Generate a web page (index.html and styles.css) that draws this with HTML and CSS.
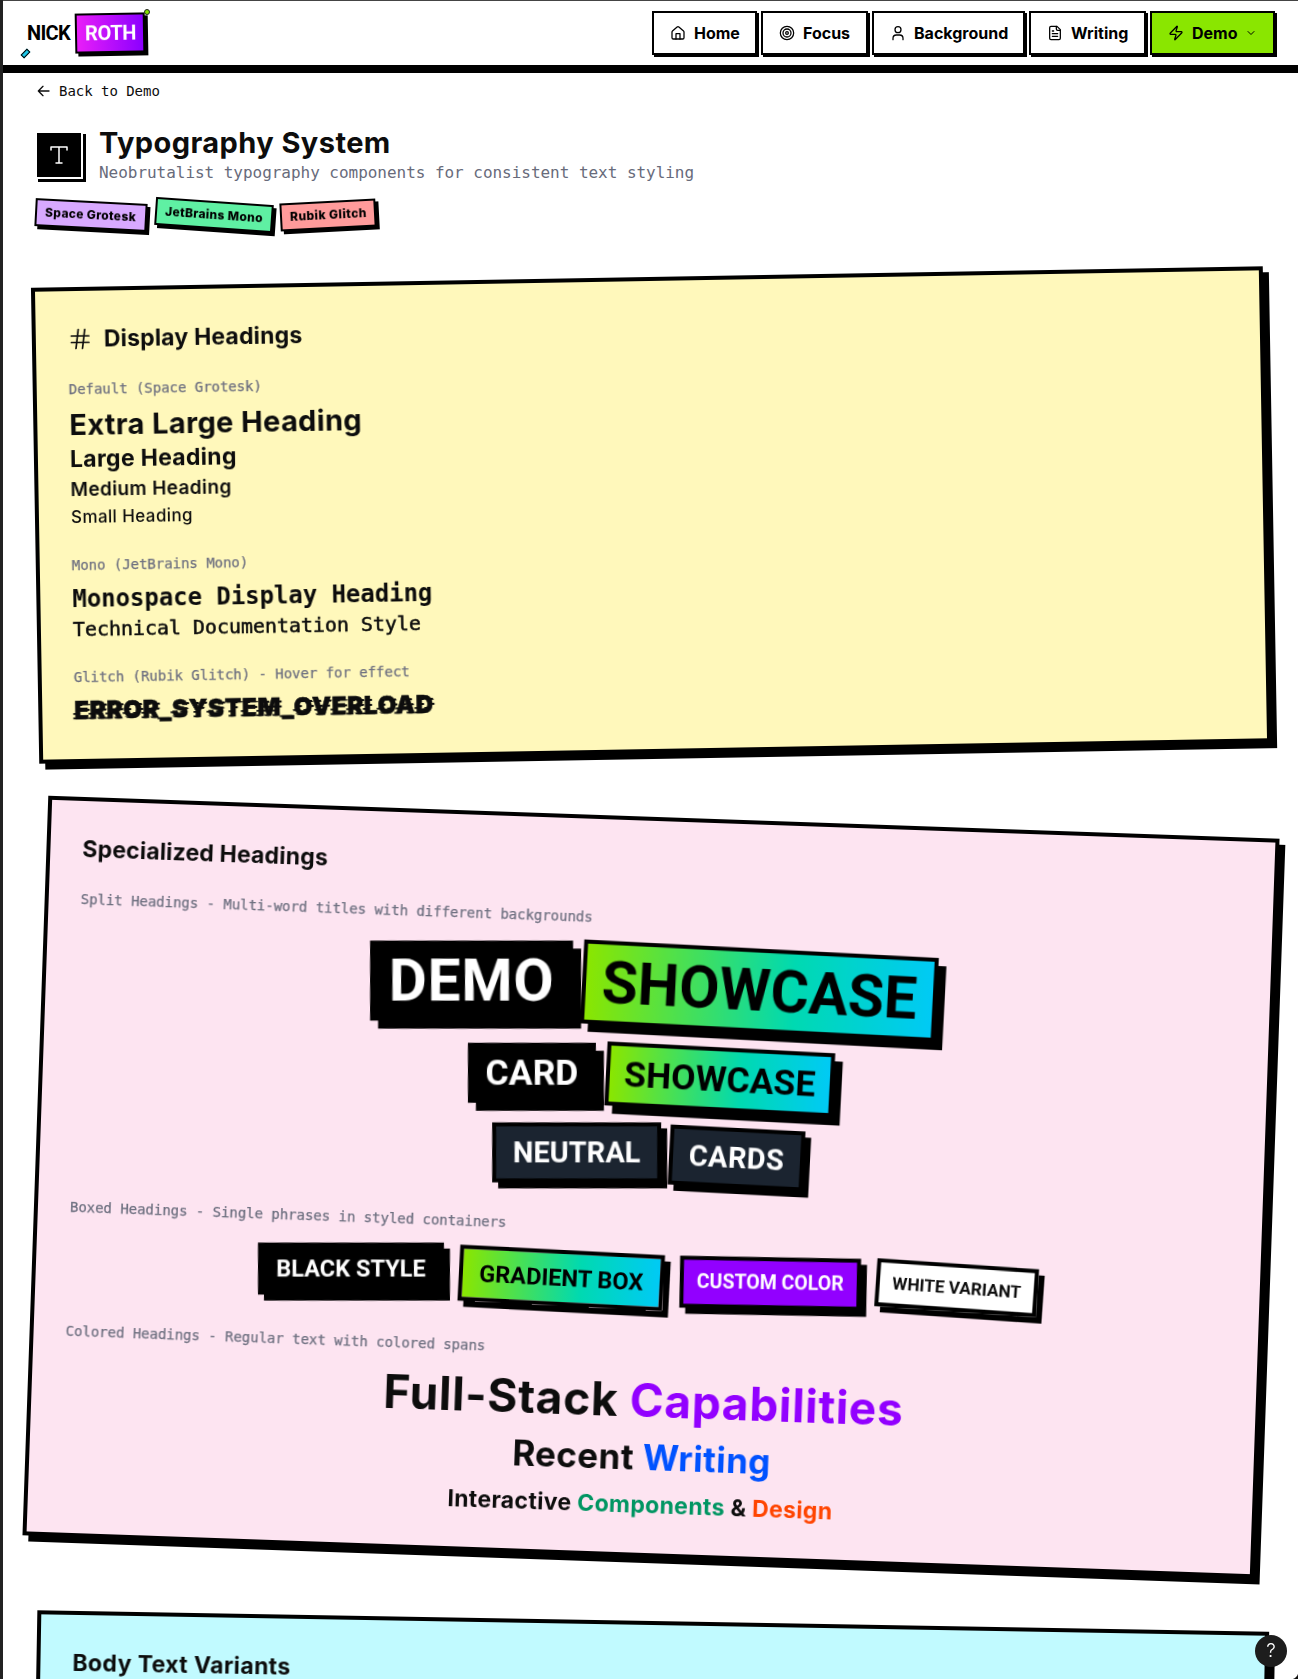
FILE: index.html
```html
<!DOCTYPE html>
<html lang="en">
<head>
<meta charset="utf-8">
<title>Typography System</title>
<link rel="stylesheet" href="styles.css">
</head>
<body>
<header class="site-header">
  <a class="logo">
    <span class="logo-first">NICK</span>
    <span class="logo-last">ROTH</span>
    <i class="logo-dot"></i>
    <i class="logo-dash"></i>
  </a>
  <nav class="nav">
    <a class="nav-link nav-home"><svg class="icon" viewBox="0 0 24 24"><path d="M3 10.5a2 2 0 0 1 .7-1.5l7-6a2 2 0 0 1 2.6 0l7 6a2 2 0 0 1 .7 1.5V19a2 2 0 0 1-2 2H5a2 2 0 0 1-2-2z"/><path d="M15 21v-8H9v8"/></svg><span>Home</span></a>
    <a class="nav-link nav-focus"><svg class="icon" viewBox="0 0 24 24"><circle cx="12" cy="12" r="10"/><circle cx="12" cy="12" r="6"/><circle cx="12" cy="12" r="2"/></svg><span>Focus</span></a>
    <a class="nav-link nav-background"><svg class="icon" viewBox="0 0 24 24"><circle cx="12" cy="7" r="4.5"/><path d="M4.500 22v-2a5 5 0 0 1 5-5h5a5 5 0 0 1 5 5v2"/></svg><span>Background</span></a>
    <a class="nav-link nav-writing"><svg class="icon" viewBox="0 0 24 24"><path d="M15 2H6a2 2 0 0 0-2 2v16a2 2 0 0 0 2 2h12a2 2 0 0 0 2-2V7z"/><path d="M14 2v4a2 2 0 0 0 2 2h4M10 9H8M16 13H8M16 17H8"/></svg><span>Writing</span></a>
    <a class="nav-link nav-demo"><svg class="icon" viewBox="0 0 24 24"><path d="M4 14a1 1 0 0 1-.8-1.6l9.900-10.200a.5.5 0 0 1 .9.500l-1.900 6A1 1 0 0 0 13 10h7a1 1 0 0 1 .8 1.600l-9.900 10.200a.5.5 0 0 1-.9-.5l1.900-6A1 1 0 0 0 11 14z"/></svg><span>Demo</span><svg class="chevron" viewBox="0 0 24 24"><path d="m6 9 6 6 6-6"/></svg></a>
  </nav>
</header>

<main class="page">
  <a class="back"><svg class="icon" viewBox="0 0 24 24"><path d="m12 5-7 7 7 7M21 12H5"/></svg><span>Back to Demo</span></a>

  <div class="intro">
    <span class="intro-icon"><svg viewBox="0 0 24 24"><path d="M4 7V4h16v3M9 20h6M12 4v16"/></svg></span>
    <div>
      <h1 class="h-xl intro-title">Typography System</h1>
      <p class="intro-text">Neobrutalist typography components for consistent text styling</p>
    </div>
  </div>
  <div class="tags">
    <span class="tag tag-purple">Space Grotesk</span>
    <span class="tag tag-green">JetBrains Mono</span>
    <span class="tag tag-red">Rubik Glitch</span>
  </div>

  <section class="card card-yellow">
    <h2 class="card-title"><svg class="hash" viewBox="0 0 24 24"><path d="M3.500 9h17.500M3.500 15.500h17.500M10.500 2.500 8 21.500M17 2.500l-2.500 19"/></svg>Display Headings</h2>
    <div class="group">
      <p class="label">Default (Space Grotesk)</p>
      <div class="samples">
        <h3 class="h-xl">Extra Large Heading</h3>
        <h3 class="h-lg">Large Heading</h3>
        <h3 class="h-md">Medium Heading</h3>
        <h3 class="h-sm">Small Heading</h3>
      </div>
    </div>
    <div class="group">
      <p class="label">Mono (JetBrains Mono)</p>
      <div class="samples">
        <h3 class="mono-lg">Monospace Display Heading</h3>
        <h3 class="mono-md">Technical Documentation Style</h3>
      </div>
    </div>
    <div class="group">
      <p class="label">Glitch (Rubik Glitch) - Hover for effect</p>
      <div class="samples">
        <h3 class="glitch" data-text="ERROR_SYSTEM_OVERLOAD">ERROR_SYSTEM_OVERLOAD</h3>
      </div>
    </div>
  </section>

  <section class="card card-pink">
    <h2 class="card-title">Specialized Headings</h2>
    <div class="stack">
      <p class="label">Split Headings - Multi-word titles with different backgrounds</p>
      <h3 class="split split-xl"><span class="box box-black">DEMO</span><span class="box box-gradient">SHOWCASE</span></h3>
      <h3 class="split split-lg"><span class="box box-black">CARD</span><span class="box box-gradient">SHOWCASE</span></h3>
      <h3 class="split split-md"><span class="box box-neutral">NEUTRAL</span><span class="box box-neutral box-tilt">CARDS</span></h3>
    </div>
    <div class="stack">
      <p class="label">Boxed Headings - Single phrases in styled containers</p>
      <div class="boxed">
        <h3 class="box box-black boxed-black">BLACK STYLE</h3>
        <h3 class="box box-gradient boxed-gradient">GRADIENT BOX</h3>
        <h3 class="box boxed-purple">CUSTOM COLOR</h3>
        <h3 class="box boxed-white">WHITE VARIANT</h3>
      </div>
    </div>
    <div class="stack">
      <p class="label">Colored Headings - Regular text with colored spans</p>
      <div class="colored">
        <h3 class="c-xl">Full-Stack <span class="purple">Capabilities</span></h3>
        <h3 class="c-lg">Recent <span class="blue">Writing</span></h3>
        <h3 class="c-md">Interactive <span class="green">Components</span> &amp; <span class="orange">Design</span></h3>
      </div>
    </div>
  </section>

  <section class="card card-cyan">
    <h2 class="card-title body-title">Body Text Variants</h2>
  </section>
</main>

<button class="help">?</button>
<i class="corner"></i>
</body>
</html>
```
FILE: styles.css
```css
* { box-sizing: border-box; margin: 0; padding: 0; }

html, body { height: 1679px; overflow: hidden; }

body {
  background: #fff;
  border-left: 3px solid #222;
  color: #0d0d0d;
  font-family: Inter, "Liberation Sans", sans-serif;
}

svg { fill: none; stroke: currentColor; stroke-width: 2; stroke-linecap: round; stroke-linejoin: round; flex: none; }
h1, h2, h3 { font-weight: 700; white-space: nowrap; }
.icon { width: 16px; height: 16px; }

/* Header */
.site-header {
  display: flex;
  align-items: center;
  justify-content: space-between;
  height: 73px;
  padding: 0 23px 0 24px;
  border-top: 1px solid #444;
  border-bottom: 8px solid #000;
  color: #000;
}

.logo {
  position: relative;
  display: flex;
  align-items: center;
  gap: 5px;
  font: 700 20px/28px Roboto, sans-serif;
}
.logo-first { width: 43px; letter-spacing: -0.7px; }
.logo-last {
  width: 70px;
  padding: 4px 8px;
  border: 2px solid #000;
  background: linear-gradient(90deg, #e91ef8, #8b00ff);
  filter: drop-shadow(3px 3px 0 #000);
  color: #fff;
  letter-spacing: -0.4px;
  transform: rotate(-1deg);
}
.logo-dot {
  position: absolute;
  top: -4px;
  right: -5px;
  width: 6px;
  height: 6px;
  border: 1px solid #222;
  border-radius: 50%;
  background: #84e000;
}
.logo-dash {
  position: absolute;
  left: -6px;
  bottom: -3px;
  width: 9px;
  height: 5px;
  border: 1px solid #000;
  background: #1cc6e8;
  transform: rotate(-45deg);
}

.nav { display: flex; gap: 4px; }
.nav-link {
  display: flex;
  align-items: center;
  gap: 8px;
  height: 44px;
  padding: 0 14px 0 16px;
  border: 2px solid #000;
  background: #fff;
  box-shadow: 2px 2px 0 #000;
  font-size: 16px;
  font-weight: 700;
}
.nav-link .icon { stroke-width: 1.9; }
.nav-home { width: 105px; }
.nav-focus { width: 107px; }
.nav-background { width: 153px; }
.nav-writing { width: 117px; }
.nav-demo { width: 125px; background: #8ae600; }
.nav-link .chevron { width: 12px; height: 12px; margin-left: -1px; }

/* Page intro */
.page { padding: 8px 31px 0 32px; }

.back {
  display: flex;
  align-items: center;
  gap: 8px;
  height: 20px;
  font: 14px/20px "DejaVu Sans Mono", monospace;
  letter-spacing: -0.03px;
}

.intro { display: flex; align-items: center; gap: 16px; margin-top: 24px; }
.intro-icon {
  display: flex;
  align-items: center;
  justify-content: center;
  width: 48px;
  height: 48px;
  border: 2px solid #fff;
  background: #000;
  box-shadow: 3px 3px 0 #000;
  color: #fff;
}
.intro-icon svg { width: 24px; height: 24px; stroke-width: 1.5; }
.intro-title { letter-spacing: 0.42px; }
.intro-text {
  color: #686b7b;
  font: 16px/24px "DejaVu Sans Mono", monospace;
  letter-spacing: -0.035px;
}

.tags { display: flex; gap: 8px; margin-top: 16px; }
.tag {
  padding: 4px 8px;
  border: 2px solid #000;
  filter: drop-shadow(3px 3px 0 #000);
  color: #000;
  font-size: 12px;
  font-weight: 800;
  line-height: 16px;
  letter-spacing: 0.35px;
  white-space: nowrap;
}
.tag-purple { width: 112px; background: #d8a9ff; transform: rotate(3deg); }
.tag-green { width: 118px; background: #5ff0a3; transform: rotate(4deg); }
.tag-red { width: 96px; margin-left: -1px; background: #ff9b9b; letter-spacing: 0.45px; transform: rotate(-3deg); }

/* Type scale */
.h-xl { font-size: 29px; line-height: 36px; letter-spacing: 0.36px; }
.h-xl.intro-title { letter-spacing: 0.42px; }
.h-lg { font-size: 23px; line-height: 32px; letter-spacing: 0.3px; }
.h-md { padding-top: 1px; font-size: 19px; line-height: 27px; font-weight: 600; letter-spacing: 0.37px; }
.h-sm { font-size: 17px; line-height: 28px; font-weight: 500; letter-spacing: 0.4px; }
.mono-lg { font: 700 24px/32px "DejaVu Sans Mono", monospace; letter-spacing: -0.05px; }
.mono-md { font: 400 20px/28px "DejaVu Sans Mono", monospace; letter-spacing: -0.04px; -webkit-text-stroke: 0.5px; }

.glitch {
  position: relative;
  width: max-content;
  font-size: 24px;
  font-weight: 900;
  line-height: 32px;
  letter-spacing: 0.75px;
  -webkit-text-stroke: 0.6px;
}
.glitch::before, .glitch::after { content: attr(data-text); position: absolute; left: 0; top: 0; }
.glitch::before { transform: translateX(2px); clip-path: polygon(0 28%, 100% 28%, 100% 34%, 0 34%, 0 44%, 100% 44%, 100% 50%, 0 50%); }
.glitch::after { transform: translateX(-2px); clip-path: polygon(0 56%, 100% 56%, 100% 62%, 0 62%, 0 70%, 100% 70%, 100% 80%, 0 80%); }

.label {
  color: #6e7080;
  font: 14px/20px "DejaVu Sans Mono", monospace;
  letter-spacing: -0.03px;
  white-space: nowrap;
  -webkit-text-stroke: 0.25px;
}

/* Cards */
.card {
  padding: 32px;
  border: 4px solid #000;
  filter: drop-shadow(6px 6px 0 #000);
}
.card-title {
  display: flex;
  align-items: center;
  gap: 12px;
  font-size: 23px;
  line-height: 32px;
  letter-spacing: 0.18px;
}
.card-yellow { margin-top: 48px; background: #fff8bb; transform: rotate(-1deg); }
.card-pink { height: 740px; margin-top: 64px; background: #fde4f1; transform: rotate(2deg); }
.card-cyan { height: 260px; margin-top: 64px; background: #c1faff; transform: rotate(1deg); }
.body-title { letter-spacing: 0.38px; }
.hash { width: 24px; height: 24px; stroke-width: 1.7; }
.group { margin-top: 24px; }
.samples { margin-top: 8px; }

.stack { display: flex; flex-direction: column; gap: 16px; margin-top: 32px; }
.card-title + .stack { margin-top: 24px; }

.split {
  display: flex;
  align-items: center;
  justify-content: center;
  gap: 8px;
  padding-right: 8px;
}
.split-xl { padding-right: 11px; font-size: 58.500px; line-height: 60px; gap: 7px; }
.split-lg { font-size: 35.500px; line-height: 40px; padding-right: 10px; }
.split-md { font-size: 29px; line-height: 36px; }

.box {
  padding: 8px 0;
  border: 4px solid #000;
  filter: drop-shadow(6px 6px 0 #000);
  font-family: Roboto, "Liberation Sans", sans-serif;
  text-align: center;
}
.box-black { margin: 2px; border-width: 2px; background: #000; color: #fff; transform: rotate(-2deg); }
.box-gradient { background: linear-gradient(90deg, #8ae600, #00d9b1 60%, #00caf5); color: #000; transform: rotate(1deg); }
.box-neutral { background: #1b2430; color: #fff; transform: rotate(-2deg); }
.box-neutral.box-tilt { transform: rotate(1deg); }

.split-xl .box, .split-lg .box { filter: drop-shadow(8px 8px 0 #000); }
.split-xl .box-black { width: 203px; letter-spacing: 0.8px; }
.split-xl .box-gradient { width: 355px; }
.split-lg .box-black { width: 128px; }
.split-lg .box-gradient { width: 228px; }
.split-md .box-neutral { width: 169px; }
.split-md .box-tilt { width: 135px; letter-spacing: 0.4px; }

.boxed { display: flex; align-items: flex-start; justify-content: center; gap: 15.500px; height: 56px; }
.boxed-black { width: 186px; margin: 0; font-size: 23.500px; line-height: 32px; }
.boxed-gradient { width: 205px; font-size: 23.500px; line-height: 32px; filter: none; box-shadow: 6px 6px 0 #000; }
.boxed-purple { width: 181px; background: #9200ff; color: #fff; font-size: 19.500px; line-height: 28px; transform: rotate(-1deg); }
.boxed-white { width: 162px; background: #fff; color: #0d0d0d; font-size: 17.200px; line-height: 24px; transform: rotate(2deg); filter: none; box-shadow: 6px 6px 0 #000; }

.colored { display: flex; flex-direction: column; align-items: center; gap: 12px; }
.c-xl { margin-bottom: 2px; font-size: 46px; line-height: 46px; letter-spacing: 0.67px; }
.c-lg { font-size: 35px; line-height: 40px; letter-spacing: 0.4px; }
.c-md { font-size: 23px; line-height: 32px; letter-spacing: 0.34px; }
.purple { color: #9200ff; }
.blue { color: #0052ff; }
.green { color: #009562; }
.orange { color: #ff4500; }

/* Floating help button */
.help {
  position: fixed;
  right: 11px;
  bottom: 12px;
  width: 32px;
  height: 32px;
  border: 0;
  border-radius: 50%;
  background: #1d1d1d;
  color: #fff;
  font: 300 19px/32px Inter, sans-serif;
}
.corner {
  position: fixed;
  right: 0;
  bottom: 0;
  width: 8px;
  height: 8px;
  background: radial-gradient(circle at 0 0, transparent 8px, #111 9px);
}
```
